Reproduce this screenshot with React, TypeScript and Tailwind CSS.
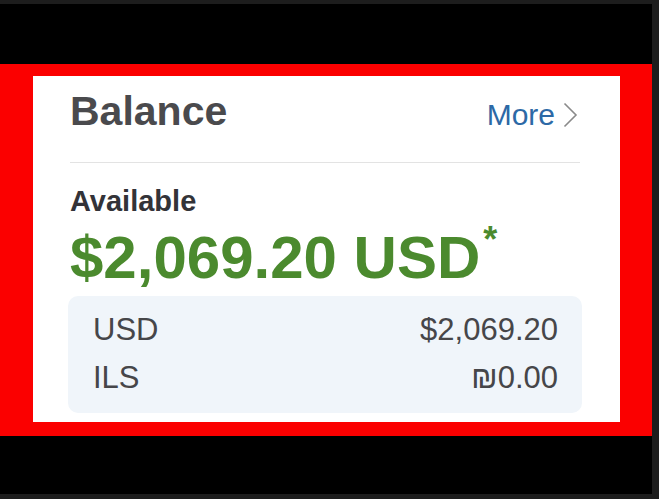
export default function App() {
  return (
    <div
      className="w-[659px] h-[499px] bg-[#1d1d1d] pt-[4px] pr-[7px] pb-[5px] flex flex-col"
      style={{ fontFamily: '"Liberation Sans", Arial, sans-serif' }}
    >
      <div className="h-[60px] bg-black" />
      <div className="flex-1 bg-[#fb0000] pl-[33px] pr-[32px] pt-[12px] pb-[14px] flex">
        <div className="flex-1 bg-white pl-[37px] pr-[40px] pt-[15px] pb-[9px] flex flex-col">
          <div className="flex items-start justify-between">
            <h2 className="text-[41px] leading-[41px] font-bold text-[#4a4a4d]">Balance</h2>
            <a className="flex items-center gap-[8px] mt-[9px] mr-[2px] text-[30px] leading-[30px] text-[#2d69a6]">
              More
              <svg width="15" height="26" viewBox="0 0 15 26" fill="none">
                <path d="M1.5 1.5 L13 13 L1.5 24.5" stroke="#8a8a8a" strokeWidth="1.6" />
              </svg>
            </a>
          </div>
          <div className="mt-[30px] h-[1px] bg-[#e3e3e3]" />
          <div className="mt-[24px] text-[29px] leading-[29px] font-bold text-[#333338]">Available</div>
          <div className="mt-[12px] flex items-start text-[60px] leading-[60px] font-bold text-[#4b8a2e]">
            $2,069.20 USD
            <span className="text-[36px] leading-[36px] ml-[3px] -mt-[6px]">*</span>
          </div>
          <div className="mt-[8px] -mx-[2px] rounded-[10px] bg-[#f0f5fa] pl-[25px] pr-[24px] pt-[10px] pb-[11px] text-[31px] leading-[48px] text-[#464649]">
            <div className="flex justify-between">
              <span>USD</span>
              <span>$2,069.20</span>
            </div>
            <div className="flex justify-between">
              <span>ILS</span>
              <span>₪0.00</span>
            </div>
          </div>
        </div>
      </div>
      <div className="h-[59px] bg-black" />
    </div>
  );
}
